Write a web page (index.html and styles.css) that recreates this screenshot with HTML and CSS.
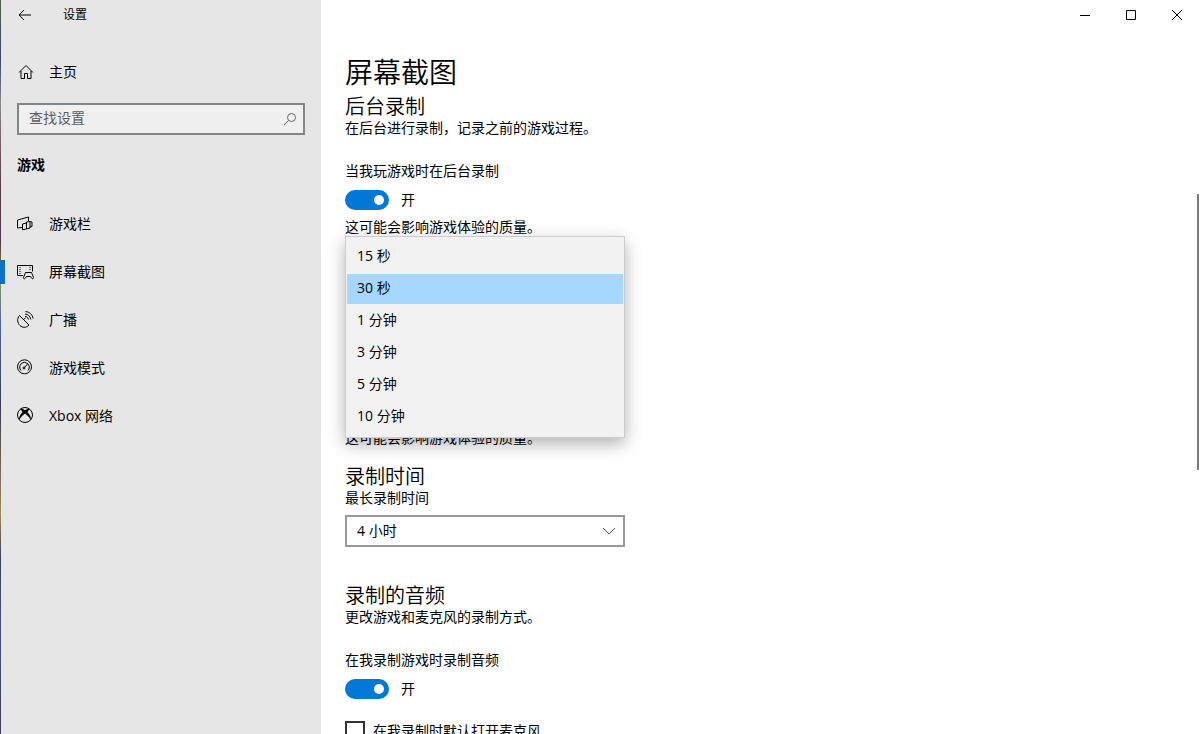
FILE: index.html
```html
<!DOCTYPE html>
<html lang="zh-CN">
<head>
<meta charset="utf-8">
<title>设置</title>
<link rel="stylesheet" href="styles.css">
</head>
<body>
<div class="window">

  <aside class="sidebar">
    <div class="titlebar">
      <button class="back" aria-label="返回">
        <svg width="14" height="12" viewBox="0 0 14 12"><path d="M13 6H1M6 1L1 6l5 5"/></svg>
      </button>
      <span class="app-name">设置</span>
    </div>

    <a class="nav-item home" href="#home">
      <svg width="18" height="18" viewBox="0 0 18 18"><path d="M2 9.5L9 2.500l7 7M4 8v7.500h3.500v-5h3v5H14V8"/></svg>
      主页
    </a>

    <div class="search">
      <input type="text" placeholder="查找设置" aria-label="查找设置">
      <svg width="14" height="14" viewBox="0 0 14 14"><circle cx="8.500" cy="5.500" r="4"/><path d="M5.500 8.500L1 13"/></svg>
    </div>

    <h3>游戏</h3>

    <nav>
      <a class="nav-item" href="#gamebar">
        <svg width="18" height="18" viewBox="0 0 18 18"><path d="M5 12.500l-4.500.5V5l11-3v4M5.500 9l4-1v6l-4 .8zM9.500 7l3.500-.5v6.500l-3.500.8zM13 6.500l2 .5v4.500l-2 .5"/></svg>
        游戏栏
      </a>
      <a class="nav-item active" href="#captures">
        <svg width="18" height="18" viewBox="0 0 18 18"><path d="M6 12.500H.5v-10h15v6"/><path d="M3 4v8M13 4v4" stroke-dasharray="1 1"/><path d="M8.500 9.500h6l2 5c.3 1.500-1.500 1.500-2 .5L13.500 13.500h-4L8.500 15c-.5 1-2.300 1-2-.5z"/></svg>
        屏幕截图
      </a>
      <a class="nav-item" href="#broadcast">
        <svg width="18" height="18" viewBox="0 0 18 18"><path d="M2.500 4.500C-.5 8 .5 12 3 14.500s6.500 2.500 9-.5zM6.500 8.500L8.500 7M8 5.500c2 0 3 1 3.500 3M8 3c3 .2 5.200 2.200 5.800 5.500M8.500.5c4 .5 7 3 7.500 7"/></svg>
        广播
      </a>
      <a class="nav-item" href="#gamemode">
        <svg width="18" height="18" viewBox="0 0 18 18"><circle cx="7.500" cy="7.800" r="7"/><path d="M4 11.500A4.800 4.800 0 1 1 11 11.500M7.500 8.500L10.500 5"/><circle cx="7" cy="9" r="1"/></svg>
        游戏模式
      </a>
      <a class="nav-item" href="#xbox">
        <svg width="18" height="18" viewBox="0 0 18 18"><circle cx="8" cy="8" r="7.500"/><path class="solid" d="M3.500 2C5 1.500 6.500 2.200 8 3.300 9.500 2.200 11 1.500 12.500 2l-2 3.200c2.200 2.300 3.800 5 3.500 8C12.500 10.500 10.500 8.300 8 6.500 5.500 8.300 3.500 10.500 2 13.200c-.3-3 1.300-5.700 3.500-8z"/></svg>
        Xbox 网络
      </a>
    </nav>
  </aside>

  <main>
    <div class="window-buttons">
      <button aria-label="最小化"><svg width="12" height="12" viewBox="0 0 12 12"><path d="M1 6.500h10"/></svg></button>
      <button aria-label="最大化"><svg width="12" height="12" viewBox="0 0 12 12"><path d="M1.500 1.500h9v9h-9z"/></svg></button>
      <button aria-label="关闭"><svg width="12" height="12" viewBox="0 0 12 12"><path d="M1 1l10 10M11 1L1 11"/></svg></button>
    </div>

    <div class="content">
      <h1>屏幕截图</h1>

      <section class="background">
        <h2>后台录制</h2>
        <p>在后台进行录制，记录之前的游戏过程。</p>
        <label class="caption" for="bg-record">当我玩游戏时在后台录制</label>
        <div class="toggle">
          <input type="checkbox" id="bg-record" checked>
          <span>开</span>
        </div>
        <p>这可能会影响游戏体验的质量。</p>
        <div class="menu-anchor">
          <div class="menu" role="listbox">
            <button role="option">15 秒</button>
            <button role="option" class="selected" aria-selected="true">30 秒</button>
            <button role="option">1 分钟</button>
            <button role="option">3 分钟</button>
            <button role="option">5 分钟</button>
            <button role="option">10 分钟</button>
          </div>
        </div>
        <p>这可能会影响游戏体验的质量。</p>
      </section>

      <section class="length">
        <h2>录制时间</h2>
        <label for="max-length">最长录制时间</label>
        <div class="select">
          <select id="max-length">
            <option>4 小时</option>
          </select>
          <svg width="14" height="8" viewBox="0 0 14 8"><path d="M1 1l6 6 6-6"/></svg>
        </div>
      </section>

      <section>
        <h2>录制的音频</h2>
        <p>更改游戏和麦克风的录制方式。</p>
        <label class="caption" for="audio">在我录制游戏时录制音频</label>
        <div class="toggle">
          <input type="checkbox" id="audio" checked>
          <span>开</span>
        </div>
        <div class="check">
          <input type="checkbox" id="mic">
          <label for="mic">在我录制时默认打开麦克风</label>
        </div>
      </section>
    </div>

    <div class="scroll-thumb"></div>
  </main>

</div>
</body>
</html>
```
FILE: styles.css
```css
* {
  box-sizing: border-box;
}

body {
  margin: 0;
  font-family: "Open Sans", "Noto Sans CJK SC", sans-serif;
  font-size: 14px;
  line-height: 20px;
  color: #000;
  background: #fff;
}

h1, h2, h3, p {
  margin: 0;
}

button, input, select {
  font: inherit;
  color: inherit;
}

button {
  padding: 0;
  border: 0;
  background: none;
}

label {
  display: block;
}

svg {
  flex: none;
  fill: none;
  stroke: #000;
}

svg .solid {
  fill: #000;
  stroke: none;
}

.window {
  display: grid;
  grid-template-columns: 321px 1fr;
  height: 100vh;
  overflow: hidden;
}

/* sidebar */
.sidebar {
  background: linear-gradient(#566048, #3c4470 8%, #888 14%, #5a3c48 25%, #4a3a48 33%, #8a9a60 38%, #4a6a9a 44%, #3a3a50 55%, #9a8a58 70%, #3c4058 76%, #48507c 85%, #3e3c58) no-repeat 0 0 / 1px 100% #e6e6e6;
}

.titlebar {
  display: flex;
  align-items: center;
  height: 30px;
  padding-left: 18px;
  font-size: 12px;
}

.back {
  display: flex;
  width: 45px;
}

.nav-item {
  display: flex;
  align-items: center;
  height: 48px;
  padding-left: 17px;
  color: #000;
  text-decoration: none;
}

.nav-item svg {
  margin-right: 14px;
}

.nav-item.active {
  background: linear-gradient(#0f6fc6, #0f6fc6) no-repeat 0 50% / 5px 24px;
}

.home {
  margin: 18px 0 7px;
}

.search {
  position: relative;
  margin: 0 16px 0 17px;
}

.search input {
  display: block;
  width: 100%;
  height: 32px;
  padding: 0 36px 3px 10px;
  border: 2px solid #858585;
  border-radius: 0;
  background: #f0f0f0;
}

.search input::placeholder {
  color: #5c5c5c;
}

.search svg {
  position: absolute;
  top: 9px;
  right: 8px;
  stroke: #666;
}

h3 {
  margin: 20px 0 25px 17px;
  font-size: 14px;
  font-weight: 700;
}

/* main part */
main {
  position: relative;
  overflow: hidden;
}

.window-buttons {
  display: flex;
  justify-content: flex-end;
}

.window-buttons button {
  display: flex;
  align-items: center;
  justify-content: center;
  width: 46px;
  height: 30px;
}

.content {
  padding: 23px 24px;
}

h1, h2 {
  font-family: "Noto Sans CJK SC", sans-serif;
  font-weight: 350;
}

h1 {
  margin-bottom: 5px;
  font-size: 28px;
  line-height: 36px;
}

h2 {
  font-size: 20px;
  line-height: 24px;
}

.caption {
  margin-top: 23px;
}

.toggle {
  display: flex;
  align-items: center;
  gap: 12px;
  margin: 9px 0 7px;
}

.toggle input {
  appearance: none;
  width: 44px;
  height: 20px;
  margin: 0;
  padding: 5px;
  border-radius: 10px;
  background: #0078d7;
}

.toggle input::before {
  content: "";
  display: block;
  width: 10px;
  height: 10px;
  margin-left: auto;
  border-radius: 50%;
  background: #fff;
}

.menu-anchor {
  position: relative;
  height: 191px;
}

.menu {
  position: absolute;
  top: -1px;
  left: 0;
  width: 280px;
  padding: 5px 1px 3px;
  border: 1px solid #ccc;
  background: #f2f2f2;
  box-shadow: 0 6px 16px rgba(0, 0, 0, .3);
}

.menu button {
  display: block;
  width: 100%;
  height: 30px;
  margin-bottom: 2px;
  padding: 0 10px 2px;
  text-align: left;
}

.menu .selected {
  background: #a6d8ff;
}

.length {
  margin: 16px 0 36px;
}

.select {
  position: relative;
  width: 280px;
  margin-top: 7px;
}

.select select {
  appearance: none;
  display: block;
  width: 100%;
  height: 32px;
  padding: 0 10px;
  border: 2px solid #999;
  border-radius: 0;
  background: #fff;
}

.select svg {
  position: absolute;
  top: 12px;
  right: 9px;
  stroke: #555;
}

.check {
  display: flex;
  align-items: center;
  gap: 8px;
  margin-top: 22px;
}

.check input {
  appearance: none;
  width: 20px;
  height: 20px;
  margin: 0;
  border: 2px solid #333;
}

.scroll-thumb {
  position: absolute;
  top: 194px;
  right: 1px;
  width: 2px;
  height: 276px;
  background: #7a7a7a;
}
```
